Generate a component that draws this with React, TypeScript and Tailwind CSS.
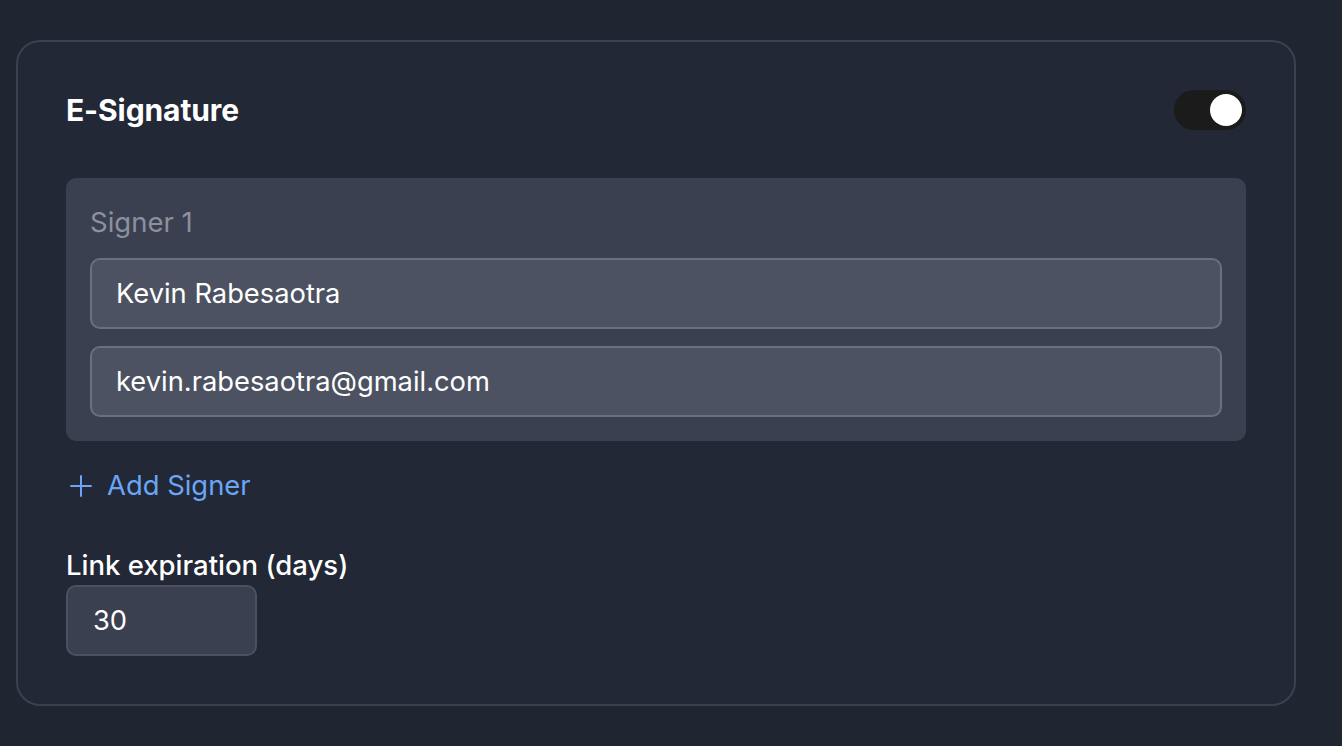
import { useState } from "react";

type Signer = {
    name: string;
    email: string;
};

export default function App() {
    const [enabled, setEnabled] = useState(true);
    const [signers, setSigners] = useState<Signer[]>([
        { name: "Kevin Rabesaotra", email: "kevin.rabesaotra@gmail.com" },
    ]);
    const [days, setDays] = useState("30");

    return (
        <div
            className="min-h-[746px] w-full bg-[#202532] pt-10 pl-4 pr-[46px] pb-10"
            style={{ fontFamily: "Inter, 'Noto Sans', sans-serif" }}
        >
            <div className="rounded-[24px] border-2 border-[#3b414e] bg-[#222836] px-[48px] pt-[48px] pb-[48px]">
                {/* header */}
                <div className="flex h-10 items-center justify-between">
                    <h2 className="text-[30px] font-bold tracking-[-0.1px] text-white">E-Signature</h2>
                    <button
                        className={`flex h-10 w-[72px] items-center rounded-full bg-[#1b1b1b] p-1 ${enabled ? "justify-end" : "justify-start"}`}
                        onClick={() => setEnabled(!enabled)}
                    >
                        <span className="block h-8 w-8 rounded-full bg-white" />
                    </button>
                </div>

                {signers.map((s, i) => (
                    <div key={i} className="mt-12 rounded-[10px] bg-[#3a4050] px-6 pt-[26px] pb-6">
                        <p className="text-[27.5px] leading-[36px] text-[#8b919d]">Signer {i + 1}</p>
                        <input
                            type="text"
                            className="mt-[18px] block h-[71px] w-full rounded-[10px] border-2 border-[#6a707d] bg-[#4c5261] px-6 text-[27.3px] text-white outline-none"
                            value={s.name}
                            onChange={(e) => {
                                const next = [...signers];
                                next[i] = { ...s, name: e.target.value };
                                setSigners(next);
                            }}
                        />
                        <input
                            type="text"
                            className="mt-[17px] block h-[71px] w-full rounded-[10px] border-2 border-[#6a707d] bg-[#4c5261] px-6 text-[27.3px] text-white outline-none"
                            value={s.email}
                            onChange={(e) => {
                                const next = [...signers];
                                next[i] = { ...s, email: e.target.value };
                                setSigners(next);
                            }}
                        />
                    </div>
                ))}

                <button
                    className="mt-[27px] flex h-9 items-center gap-[15px] pl-1 text-[27.4px] text-[#6aa6f5]"
                    onClick={() => setSigners([...signers, { name: "", email: "" }])}
                >
                    <svg width="22" height="22" viewBox="0 0 22 22" fill="none" stroke="currentColor" strokeWidth="2" strokeLinecap="round">
                        <path d="M11 1v20M1 11h20" />
                    </svg>
                    <span>Add Signer</span>
                </button>

                <label className="mt-[44px] block text-[27.5px] font-medium leading-[34px] text-white">
                    Link expiration (days)
                </label>
                <input
                    type="text"
                    className="mt-[3px] block h-[71px] w-[191px] rounded-[10px] border-2 border-[#4b5161] bg-[#3a4050] px-[25px] text-[27.3px] text-white outline-none"
                    value={days}
                    onChange={(e) => setDays(e.target.value)}
                />
            </div>
        </div>
    );
}
